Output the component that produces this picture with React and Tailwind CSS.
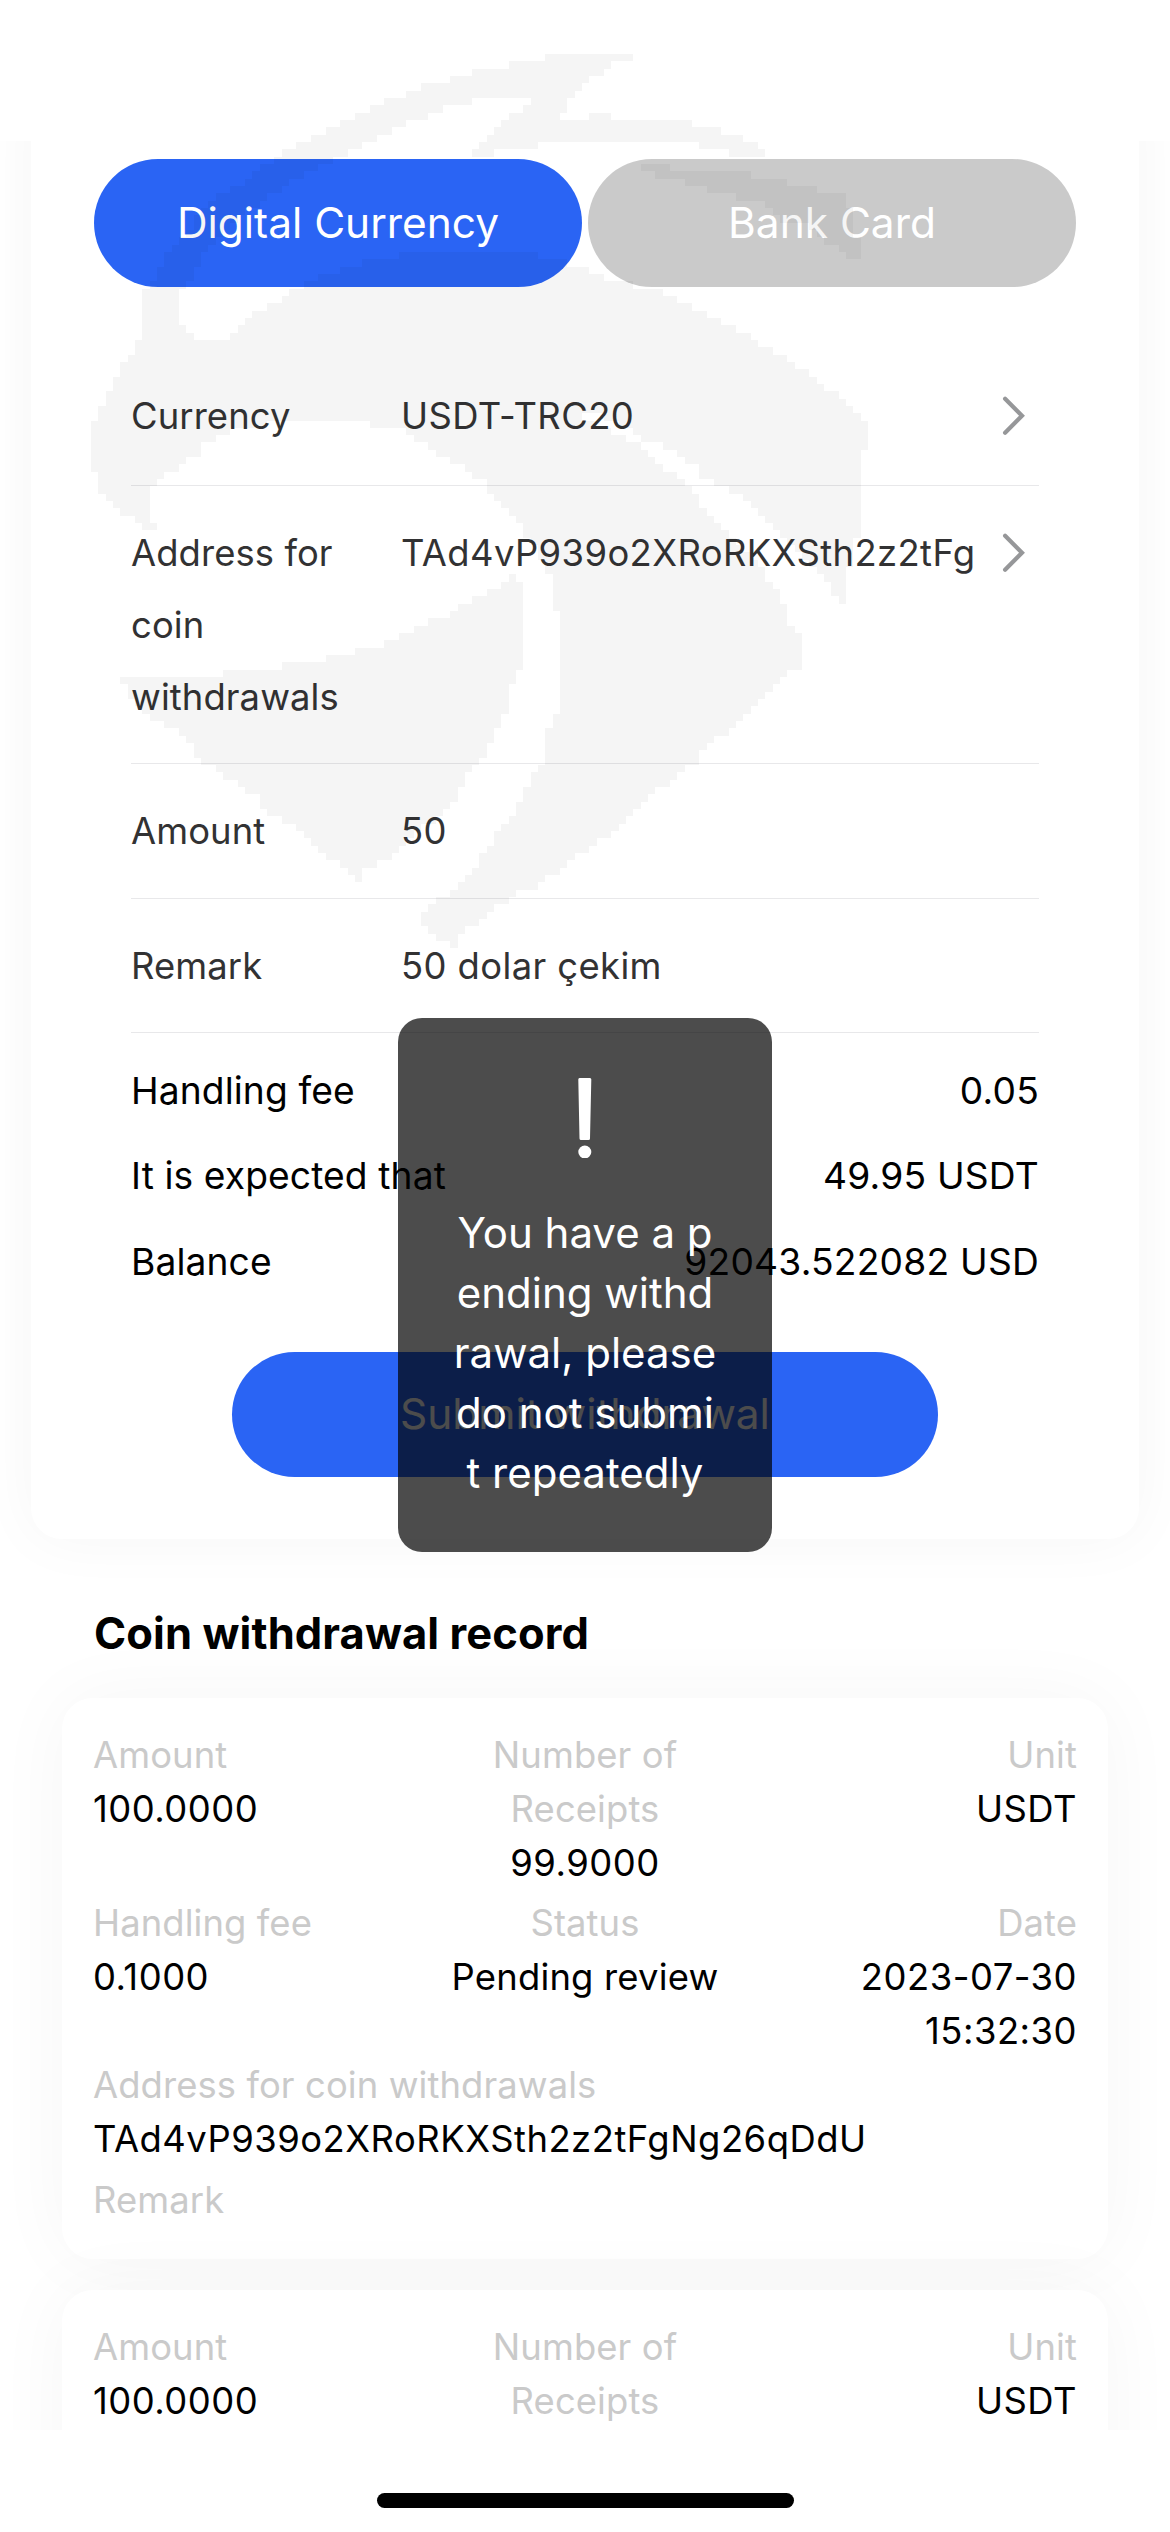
import React from 'react';

const records = [
  {
    amount: '100.0000',
    received: '99.9000',
    unit: 'USDT',
    fee: '0.1000',
    status: 'Pending review',
    date: '2023-07-30 15:32:30',
    address: 'TAd4vP939o2XRoRKXSth2z2tFgNg26qDdU',
  },
  {
    amount: '100.0000',
    received: '99.9000',
    unit: 'USDT',
    fee: '0.1000',
    status: 'Pending review',
    date: '2023-07-30 15:32:30',
    address: 'TAd4vP939o2XRoRKXSth2z2tFgNg26qDdU',
  },
];

// Outlines of the emblem, x and y in turn
const emblem = [
  [
    567, 54, 530, 61, 485, 69, 463, 76, 435, 83, 413, 91, 398, 98, 377, 105, 362, 113, 347, 120, 332, 127, 317, 134,
    303, 142, 288, 149, 281, 157, 266, 164, 251, 178, 237, 185, 222, 193, 208, 207, 200, 214, 187, 230, 179, 243,
    170, 252, 157, 273, 149, 287, 142, 295, 142, 333, 145, 338, 134, 347, 127, 361, 119, 368, 112, 383, 105, 397,
    99, 413, 91, 433, 91, 463, 98, 485, 105, 499, 112, 508, 121, 515, 142, 522, 142, 528, 155, 528, 155, 522,
    149, 520, 149, 493, 155, 485, 164, 477, 172, 470, 187, 462, 200, 454, 200, 448, 213, 442, 228, 433, 250, 427,
    276, 422, 287, 418, 366, 418, 369, 425, 398, 427, 410, 434, 427, 448, 442, 456, 457, 463, 478, 477, 492, 492,
    492, 499, 507, 513, 522, 528, 530, 538, 545, 566, 552, 580, 558, 617, 558, 711, 551, 711, 545, 762, 530, 778,
    522, 800, 515, 815, 500, 830, 492, 845, 479, 860, 470, 874, 457, 888, 444, 897, 427, 909, 421, 916, 427, 930,
    435, 937, 449, 945, 456, 945, 463, 932, 485, 916, 515, 895, 536, 887, 556, 873, 586, 850, 616, 829, 634, 811,
    653, 792, 675, 778, 696, 762, 713, 741, 733, 727, 755, 704, 778, 683, 791, 671, 800, 667, 800, 639, 791, 624,
    784, 608, 778, 590, 769, 580, 763, 571, 750, 559, 739, 541, 720, 522, 705, 508, 690, 489, 677, 478, 660, 463,
    645, 450, 631, 442, 613, 435, 600, 424, 580, 414, 592, 412, 612, 422, 633, 433, 648, 442, 668, 448, 683, 457,
    698, 470, 705, 478, 720, 485, 742, 496, 757, 515, 770, 524, 784, 538, 802, 555, 815, 573, 830, 587, 837, 601,
    843, 601, 845, 580, 851, 559, 858, 536, 858, 472, 865, 450, 865, 419, 858, 412, 843, 397, 828, 390, 813, 377,
    799, 368, 784, 357, 765, 347, 755, 339, 735, 330, 720, 318, 703, 313, 683, 303, 668, 295, 649, 288, 608, 280,
    586, 267, 556, 259, 515, 252, 422, 252, 377, 259, 354, 267, 332, 273, 310, 282, 296, 288, 287, 295, 274, 303,
    260, 310, 251, 318, 244, 325, 230, 338, 200, 338, 187, 332, 179, 317, 179, 295, 185, 290, 193, 280, 200, 260,
    207, 252, 222, 233, 237, 220, 252, 207, 272, 195, 287, 185, 302, 177, 325, 164, 340, 157, 353, 149, 368, 143,
    383, 134, 398, 127, 420, 120, 435, 113, 457, 105, 485, 98, 528, 98, 528, 105, 515, 113, 507, 120, 493, 134,
    485, 142, 472, 149, 472, 156, 493, 156, 494, 149, 536, 149, 537, 142, 698, 142, 705, 149, 748, 156, 769, 156,
    769, 149, 749, 143, 735, 135, 713, 127, 675, 120, 610, 120, 610, 113, 588, 113, 588, 120, 558, 120, 566, 107,
    573, 97, 588, 83, 603, 73, 618, 63, 631, 61, 631, 54,
  ],
  [
    511, 575, 522, 580, 522, 666, 515, 675, 507, 709, 500, 724, 493, 741, 478, 762, 463, 780, 455, 797, 440, 815,
    425, 825, 403, 846, 381, 862, 361, 873, 361, 880, 354, 880, 347, 871, 325, 855, 302, 836, 287, 822, 266, 813,
    257, 797, 237, 783, 216, 769, 201, 762, 194, 748, 179, 734, 164, 724, 149, 715, 127, 692, 121, 683, 127, 676,
    224, 674, 224, 668, 284, 667, 284, 661, 325, 661, 325, 654, 354, 653, 362, 646, 384, 646, 407, 632, 422, 624,
    448, 617, 463, 603, 478, 596, 496, 587,
  ],
  [
    639, 164, 668, 164, 675, 171, 749, 171, 749, 178, 785, 180, 791, 186, 815, 187, 821, 193, 843, 193, 851, 207,
    851, 230, 858, 240, 858, 259, 845, 259, 836, 247, 821, 237, 810, 227, 784, 220, 769, 207, 754, 200, 713, 192,
    690, 183, 662, 177, 639, 171,
  ],
];

const CELL = 7.33;

// Fill an outline row by row on a coarse grid
const toBlocks = (pts) => {
  let d = '';
  for (let row = 0; row < 123; row++) {
    const top = 54 + row * CELL;
    const y = top + CELL / 2;
    const hits = [];
    for (let i = 0; i < pts.length; i += 2) {
      const j = (i + 2) % pts.length;
      const [x1, y1, x2, y2] = [pts[i], pts[i + 1], pts[j], pts[j + 1]];
      if (y1 > y !== y2 > y) hits.push(x1 + ((y - y1) / (y2 - y1)) * (x2 - x1));
    }
    hits.sort((a, b) => a - b);
    for (let k = 0; k + 1 < hits.length; k += 2) {
      const a = 91 + Math.round((hits[k] - 91) / CELL) * CELL;
      const b = 91 + Math.round((hits[k + 1] - 91) / CELL) * CELL;
      if (b > a) d += `M${Math.round(a)} ${Math.round(top)}H${Math.round(b)}V${Math.round(top + CELL)}H${Math.round(a)}Z`;
    }
  }
  return d;
};

const Watermark = () => (
  <svg className="pointer-events-none absolute left-0 top-0" width="1170" height="1000" viewBox="0 0 1170 1000">
    <path d={emblem.map(toBlocks).join('')} fill="#000" fillOpacity="0.038" />
  </svg>
);

const Chevron = () => (
  <svg className="mt-[16px] ml-auto mr-[13px] shrink-0" width="24" height="40" viewBox="0 0 24 40" fill="none">
    <path d="M3.100 2.700L20 19.700L3.100 36.700" stroke="#969799" strokeWidth="4.2" strokeLinecap="round" />
  </svg>
);

const Field = ({ label, value, arrow, className = 'pb-[30.5px]' }) => (
  <div className={`flex border-b border-[#e8e8ea] pt-[31px] text-[36.4px] leading-[72px] text-[#323233] ${className}`}>
    <div className="w-[240px] mr-[30px] shrink-0 tracking-[0.1px]">{label}</div>
    <div className="whitespace-nowrap tracking-[0.4px]">{value}</div>
    {arrow && <Chevron />}
  </div>
);

const Total = ({ label, value }) => (
  <div className="flex justify-between text-[37.2px] leading-[85.6px] tracking-[0.1px]">
    <span>{label}</span>
    <span className="tracking-[0.2px]">{value}</span>
  </div>
);

const Cell = ({ label, value, className = '' }) => (
  <div className={className}>
    <p className="tracking-[0.1px] text-[#cacaca]">{label}</p>
    <p className="tracking-[0.5px]">{value}</p>
  </div>
);

const RecordCard = ({ record }) => (
  <div className="rounded-[31px] bg-white px-[31px] pt-[30px] pb-[32px] text-[36.4px] leading-[54px] shadow-[0_0_78px_rgba(0,0,0,0.04)]">
    <div className="mb-[6px] grid grid-cols-[328px_328px_328px]">
      <Cell label="Amount" value={record.amount} />
      <Cell label="Number of Receipts" value={record.received} className="px-[40px] text-center" />
      <Cell label="Unit" value={record.unit} className="text-right" />
    </div>
    <div className="grid grid-cols-[328px_328px_328px]">
      <Cell label="Handling fee" value={record.fee} />
      <Cell label="Status" value={<span className="tracking-[0.2px]">{record.status}</span>} className="text-center" />
      <Cell label="Date" value={record.date} className="pl-[60px] text-right" />
    </div>
    <Cell label="Address for coin withdrawals" value={record.address} />
    <p className="mt-[7px] tracking-[0.1px] text-[#cacaca]">Remark</p>
  </div>
);

const Toast = () => (
  <div className="absolute left-[398px] top-[1018px] flex h-[534px] w-[374px] flex-col items-center rounded-[24px] bg-black/70 pt-[60px] text-white">
    <svg width="14" height="80" viewBox="0 0 14 80" fill="#fff">
      <path d="M1.5 0H12Q13.3 0 13.3 1.5L12 60.5Q12 62 10.500 62H3Q1.600 62 1.500 60.500L0.300 1.500Q0.300 0 1.500 0Z" />
      <circle cx="6.800" cy="74" r="6.500" />
    </svg>
    <p className="mt-[45px] text-center text-[42px] leading-[60px] whitespace-pre">
      {'You have a p\nending withd\nrawal, please\ndo not submi\nt repeatedly'}
    </p>
  </div>
);

export default function App() {
  return (
    <div className="relative h-[2532px] w-[1170px] overflow-hidden bg-white font-['Inter','Liberation_Sans',sans-serif] text-black">
      <div className="h-[141px]" />
      <div className="h-[2289px] overflow-hidden">
        <div className="mx-[31px] -mt-[60px] h-[1458px] rounded-[31px] bg-white px-[63px] pt-[78px] shadow-[0_0_62px_rgba(0,0,0,0.04)]">
          <div className="flex gap-[6px] text-center text-[42.4px] leading-[128px] text-white">
            <div className="h-[128px] w-[488px] rounded-full bg-[#2a64f4]">Digital Currency</div>
            <div className="h-[128px] w-[488px] rounded-full bg-[#cacaca]">Bank Card</div>
          </div>

          <div className="mx-[37px] mt-[62px]">
            <Field label="Currency" value="USDT-TRC20" arrow className="pb-[33px]" />
            <Field label="Address for coin withdrawals" value="TAd4vP939o2XRoRKXSth2z2tFg" arrow className="pb-[30px]" />
            <Field label="Amount" value="50" />
            <Field label="Remark" value="50 dolar çekim" />
            <div className="mt-[14.5px]">
              <Total label="Handling fee" value="0.05" />
              <Total label="It is expected that" value="49.95 USDT" />
              <Total label="Balance" value="92043.522082 USD" />
            </div>
          </div>

          <div className="mx-auto mt-[47.7px] h-[125px] w-[706px] rounded-full bg-[#2a64f4] text-center text-[42.4px] leading-[124px] text-white">
            Submit withdrawal
          </div>
        </div>

        <h2 className="mt-[63px] ml-[94px] text-[43.5px] leading-[62px] font-bold tracking-[0.1px]">Coin withdrawal record</h2>

        <div className="mx-[62px] mt-[34px] flex flex-col gap-[31px]">
          {records.map((record, i) => (
            <RecordCard key={i} record={record} />
          ))}
        </div>
      </div>
      <div className="mx-auto mt-[63px] h-[15px] w-[417px] rounded-full bg-black" />

      <Watermark />
      <Toast />
    </div>
  );
}
